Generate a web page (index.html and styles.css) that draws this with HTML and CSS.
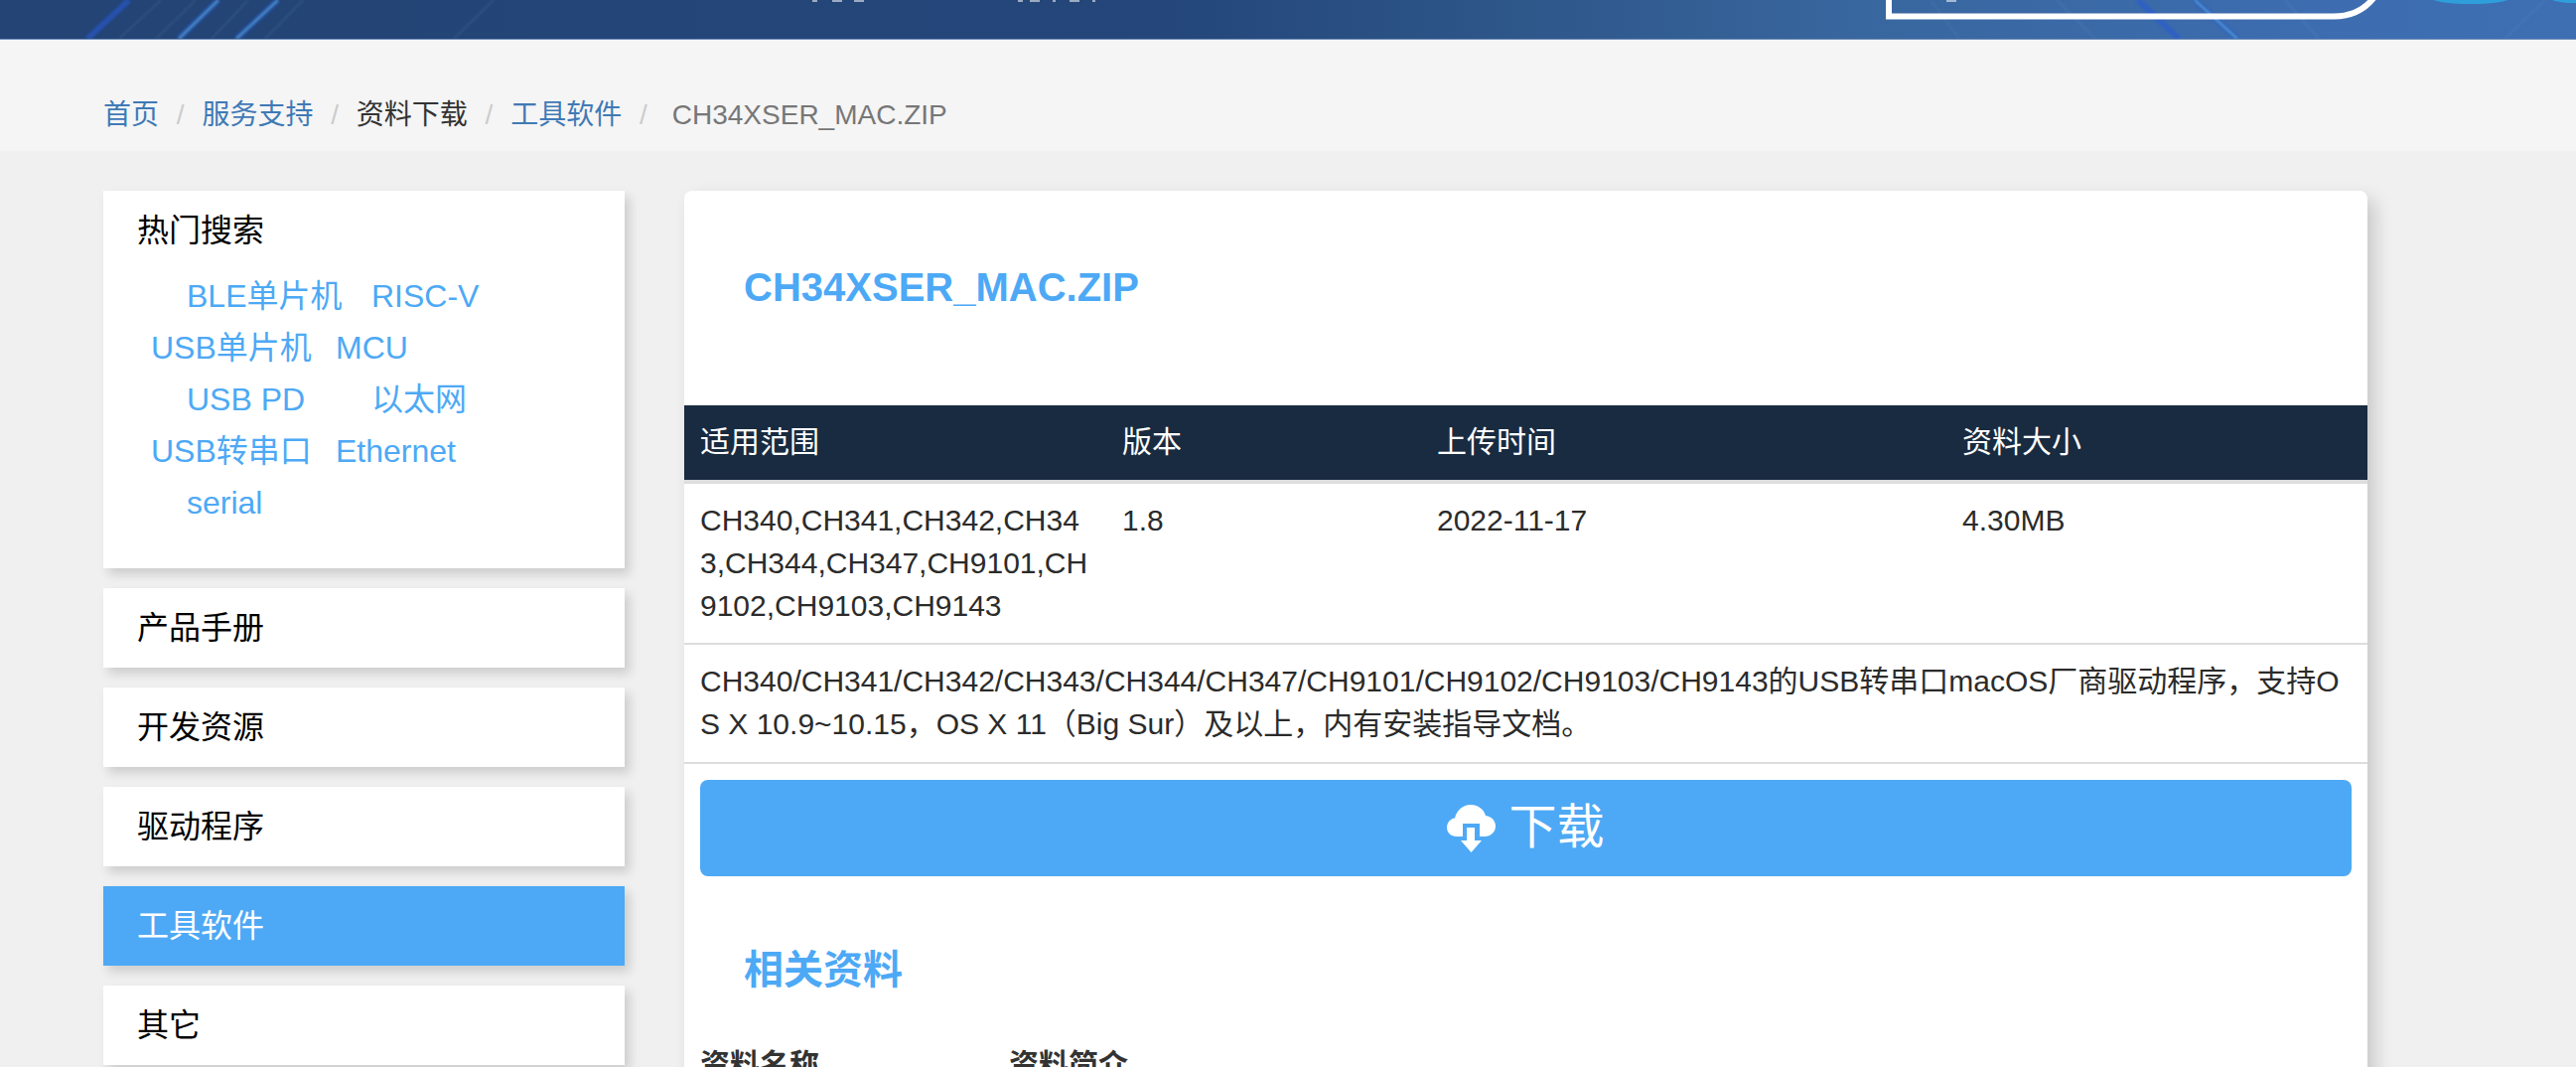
FILE: index.html
```html
<!DOCTYPE html>
<html lang="zh-CN">
<head>
    <meta charset="UTF-8">
    <meta name="viewport" content="width=device-width, initial-scale=1.0">
    <title>CH34XSER_MAC.ZIP</title>
    <link rel="stylesheet" href="styles.css">
</head>
<body>
    <div class="banner">
        <svg class="banner-art" width="2594" height="39" viewBox="0 0 2594 39">
            <g class="rays" fill="none">
                <path class="ray ray-glow" d="M88 39 130 0"/>
                <path class="ray ray-faint" d="M120 39 162 0M157 39 197 0M213 39 250 0M267 39 305 0M457 39 497 0M2522 39 2563 0"/>
                <path class="ray ray-glow" d="M180 39 220 0M238 39 280 0"/>
                <path class="ray ray-core" d="M180 39 220 0M238 39 280 0"/>
                <path class="ray ray-faint" d="M1944 0 1973 39M2301 0 2335 39M2071 0 2110 39"/>
                <path class="ray ray-glow" d="M2153 0 2194 39M2210 0 2253 39"/>
                <path class="ray ray-core" d="M2210 0 2253 39"/>
            </g>
            <path class="search-outline" fill="none" d="M1902 -3V16.5H2350C2368 16.5 2381 10 2391 -3"/>
            <ellipse class="globe-glow" cx="2488" cy="-4" rx="44" ry="8"/>
            <ellipse class="globe-glow" cx="2590" cy="-4" rx="24" ry="7"/>
            <g class="nav-bits">
                <rect x="818" y="0" width="5" height="2"/>
                <rect x="838" y="0" width="10" height="2"/>
                <rect x="860" y="0" width="10" height="2"/>
                <rect x="1025" y="0" width="5" height="2"/>
                <rect x="1037" y="0" width="10" height="2"/>
                <rect x="1060" y="0" width="3" height="2"/>
                <rect x="1077" y="0" width="10" height="2"/>
                <rect x="1100" y="0" width="3" height="2"/>
                <rect x="1960" y="0" width="10" height="2"/>
            </g>
        </svg>
    </div>

    <div class="crumbs">
        <a class="crumb crumb-link" href="#">首页</a>
        <a class="crumb crumb-link" href="#">服务支持</a>
        <span class="crumb">资料下载</span>
        <a class="crumb crumb-link" href="#">工具软件</a>
        <span class="crumb crumb-current">CH34XSER_MAC.ZIP</span>
    </div>

    <div class="page">
        <div class="side">
            <div class="side-box">
                <div class="side-item">热门搜索</div>
                <div class="hot-list">
                    <div class="hot-row"><a class="hot-link" href="#">BLE单片机</a><a class="hot-link" href="#">RISC-V</a></div>
                    <div class="hot-row hot-row-wide"><a class="hot-link" href="#">USB单片机</a><a class="hot-link" href="#">MCU</a></div>
                    <div class="hot-row"><a class="hot-link" href="#">USB PD</a><a class="hot-link" href="#">以太网</a></div>
                    <div class="hot-row hot-row-wide"><a class="hot-link" href="#">USB转串口</a><a class="hot-link" href="#">Ethernet</a></div>
                    <div class="hot-row"><a class="hot-link" href="#">serial</a></div>
                </div>
            </div>
            <a class="side-item side-box" href="#">产品手册</a>
            <a class="side-item side-box" href="#">开发资源</a>
            <a class="side-item side-box" href="#">驱动程序</a>
            <a class="side-item side-box active" href="#">工具软件</a>
            <a class="side-item side-box" href="#">其它</a>
        </div>

        <div class="main">
            <h2 class="file-title">CH34XSER_MAC.ZIP</h2>
            <table class="info">
                <colgroup>
                    <col class="col-scope">
                    <col class="col-version">
                    <col class="col-date">
                    <col class="col-size">
                </colgroup>
                <thead>
                    <tr>
                        <th>适用范围</th>
                        <th>版本</th>
                        <th>上传时间</th>
                        <th>资料大小</th>
                    </tr>
                </thead>
                <tbody>
                    <tr>
                        <td>CH340,CH341,CH342,CH343,CH344,CH347,CH9101,CH9102,CH9103,CH9143</td>
                        <td>1.8</td>
                        <td>2022-11-17</td>
                        <td>4.30MB</td>
                    </tr>
                    <tr>
                        <td colspan="4">CH340/CH341/CH342/CH343/CH344/CH347/CH9101/CH9102/CH9103/CH9143的USB转串口macOS厂商驱动程序，支持OS X 10.9~10.15，OS X 11（Big Sur）及以上，内有安装指导文档。</td>
                    </tr>
                </tbody>
            </table>
            <div class="download-wrap">
                <a class="download" href="#">
                    <svg class="download-icon" width="50" height="48" viewBox="0 0 50 48">
                        <path d="M10 32C4 32 0 28 0 23c0-5 3.500-9 8-9.500C10 5.500 16 0 24 0c7 0 13 4 15 11 6 1 10 5 10 10.500C49 27.500 44 32 38 32h-5V19H16v13z"/>
                        <path d="M20 23h8v13h7L24.500 48 14 36h6z"/>
                    </svg>
                    <span>下载</span>
                </a>
            </div>
            <h3 class="related-title">相关资料</h3>
            <table class="related">
                <thead>
                    <tr>
                        <th class="related-name">资料名称</th>
                        <th>资料简介</th>
                    </tr>
                </thead>
            </table>
        </div>
    </div>
</body>
</html>
```

FILE: styles.css
```css
* {
    margin: 0;
    padding: 0;
    box-sizing: border-box;
}
html, body {
    height: 100vh;
    overflow: hidden;
}
body {
    background: #f0f0f0;
    color: #333;
    font-family: "Liberation Sans", "Noto Sans CJK SC", sans-serif;
    font-size: 30px;
    line-height: 1.42857;
}
a {
    text-decoration: none;
}

/* top banner, only its lower edge is in view */
.banner {
    height: 40px;
    overflow: hidden;
    background: linear-gradient(90deg, #234474 0%, #24467a 45%, #2b5284 55%, #38669e 72%, #3d6db0 90%, #3e6fb3 100%);
    border-bottom: 1px solid #6f8db8;
}
.banner-art {
    display: block;
}
.rays {
    filter: blur(1px);
}
.ray {
    stroke-width: 2;
}
.ray-faint {
    stroke: rgba(120, 170, 210, 0.14);
}
.ray-glow {
    stroke: rgba(40, 90, 210, 0.6);
    stroke-width: 6;
}
.ray-core {
    stroke: rgba(110, 200, 205, 0.6);
    stroke-width: 2;
}
.search-outline {
    stroke: #fff;
    stroke-width: 6;
}
.globe-glow {
    fill: #2f9fdc;
}
.nav-bits rect {
    fill: rgba(255, 255, 255, 0.55);
}

.crumbs {
    display: flex;
    align-items: center;
    height: 112px;
    padding: 56px 0 16px 104px;
    background: #f5f5f5;
    font-size: 28px;
    line-height: 40px;
}
.crumb + .crumb::before {
    content: "/";
    padding: 0 17.800px;
    color: #ccc;
}
.crumb-link {
    color: #3f7ab6;
}
.crumb-current {
    color: #777;
}
.crumb-current::before {
    padding-right: 25px !important;
}

.page {
    display: flex;
    gap: 60px;
    padding: 40px 0 0 104px;
}
.side {
    display: flex;
    flex-direction: column;
    gap: 20px;
    flex: 0 0 525px;
}
.side-box {
    background: #fff;
    box-shadow: 5px 6px 10px rgba(0, 0, 0, 0.15);
}
.side-item {
    display: flex;
    align-items: center;
    height: 80px;
    padding: 2px 0 0 34px;
    color: #000;
    font-size: 32px;
}
.side-item.active {
    background: #4da9f5;
    color: #fff;
}
.hot-list {
    padding-bottom: 40px;
    font-size: 32px;
    line-height: 52px;
}
.hot-row {
    display: flex;
    padding-left: 84px;
}
.hot-row-wide {
    padding-left: 48px;
}
.hot-link {
    flex: 0 0 186px;
    color: #4da9f5;
    white-space: nowrap;
}

.main {
    flex: 0 0 1695px;
    height: 1400px;
    background: #fff;
    border-radius: 8px;
    box-shadow: 8px 8px 18px rgba(0, 0, 0, 0.16);
}
.file-title {
    height: 216px;
    padding: 69px 0 0 60px;
    color: #4da9f5;
    font-size: 40px;
    font-weight: bold;
    line-height: 57px;
}

.info {
    width: 100%;
    table-layout: fixed;
    border-collapse: separate;
    border-spacing: 0;
    word-break: break-all;
}
.col-scope { width: 425px; }
.col-version { width: 317px; }
.col-date { width: 529px; }
.col-size { width: 424px; }
.info th, .info td, .related th {
    padding: 16px;
    text-align: left;
    vertical-align: top;
}
.info th {
    background: #192b40;
    color: #fff;
    font-weight: normal;
    border-bottom: 4px solid #ddd;
}
.info td {
    color: #2b2b2b;
    border-bottom: 2px solid #ddd;
}

.download-wrap {
    padding: 16px;
}
.download {
    display: flex;
    align-items: center;
    justify-content: center;
    gap: 12px;
    height: 97px;
    background: #4da9f5;
    border-radius: 8px;
    color: #fff;
    font-size: 48px;
}
.download-icon {
    fill: #fff;
}

.related-title {
    height: 137px;
    padding: 50px 0 0 60px;
    color: #4da9f5;
    font-size: 40px;
    font-weight: bold;
    line-height: 57px;
}
.related {
    border-collapse: collapse;
    table-layout: fixed;
}
.related-name {
    width: 311px;
}
.related th {
    color: #333;
    font-weight: bold;
}
```
